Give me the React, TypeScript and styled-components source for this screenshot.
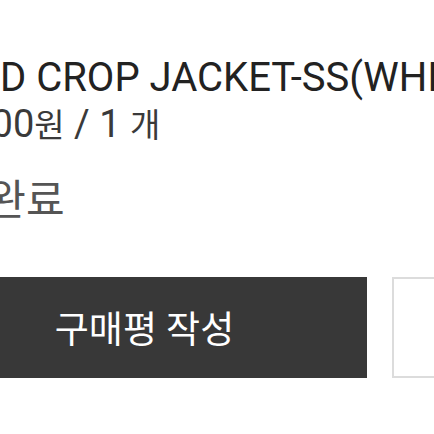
import { createGlobalStyle, styled } from 'styled-components';

const GlobalStyle = createGlobalStyle`
  html, body {
    margin: 0;
    padding: 0;
    background: #fff;
  }
  body {
    font-family: Roboto, 'Noto Sans CJK KR', sans-serif;
  }
`;

const Page = styled.div`
  width: 434px;
  height: 434px;
  overflow: hidden;
  background: #fff;
  display: flex;
  flex-direction: column;
`;

const ItemInfo = styled.div`
  display: flex;
  flex-direction: column;
  padding-top: 54px;
`;

const Title = styled.div`
  font-size: 40px;
  line-height: 47px;
  color: #222;
  white-space: nowrap;
`;

const Price = styled.div`
  font-size: 38px;
  line-height: 47px;
  color: #3a3a3a;
  margin-left: -80px;
  white-space: nowrap;
`;

const Hangul = styled.span`
  font-size: 33px;
`;

const Status = styled.div`
  font-size: 42px;
  line-height: 47px;
  color: #555;
  margin: 28px 0 0 -90px;
  white-space: nowrap;
`;

const ButtonRow = styled.div`
  display: flex;
  gap: 25px;
  margin-top: 53px;
  margin-left: -78px;
`;

const ReviewButton = styled.button`
  flex: none;
  width: 445px;
  height: 101px;
  background: #383838;
  color: #fff;
  border: none;
  border-radius: 0;
  font-family: Roboto, 'Noto Sans CJK KR', sans-serif;
  font-size: 37px;
  padding: 0 0 2px;
`;

const GhostButton = styled.button`
  flex: none;
  width: 200px;
  height: 101px;
  background: #fff;
  border: 2px solid #dcdcdc;
  border-radius: 0;
  padding: 0;
`;

export default function App() {
  return (
    <>
      <GlobalStyle />
      <Page>
        <ItemInfo>
          <Title>D CROP JACKET-SS(WHITE)</Title>
          <Price>
            59,000<Hangul>원</Hangul> / 1 <Hangul>개</Hangul>
          </Price>
          <Status>배송완료</Status>
        </ItemInfo>
        <ButtonRow>
          <ReviewButton>구매평 작성</ReviewButton>
          <GhostButton />
        </ButtonRow>
      </Page>
    </>
  );
}
